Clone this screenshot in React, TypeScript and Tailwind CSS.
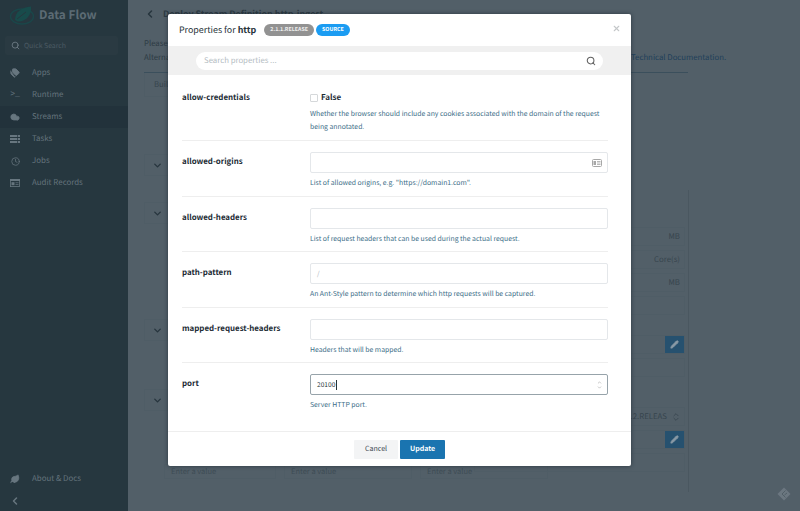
import { ChevronLeft, ChevronDown, ChevronsUpDown, Pencil, Search, X, Tags, Cloud, Clock, Leaf, ChevronUp } from "lucide-react";

const F = "font-['Noto_Sans_CJK_SC','Liberation_Sans',sans-serif] [text-rendering:geometricPrecision]";

function Logo() {
  return (
    <svg width="26" height="24" viewBox="0 0 26 24" className="shrink-0">
      <ellipse cx="13" cy="13.5" rx="11.5" ry="7.5" fill="none" stroke="#1a4649" strokeWidth="1.4" />
      <path d="M6 17C6 9 13 4 22 3.5C23 11 18 18.5 9 18.5Z" fill="#184b4b" />
      <path d="M8 16L17 9" stroke="#26373f" strokeWidth="1" />
    </svg>
  );
}

function NavItem({ icon, label, active }: { icon: React.ReactNode; label: string; active?: boolean }) {
  return (
    <div className={`flex h-[22px] items-center pl-[4px] ${active ? "bg-[#22323b]" : ""}`}>
      <span className="flex w-[22px] justify-center text-[#67767f]">{icon}</span>
      <span className="ml-[6px] text-[7.9px] text-[#64737c]">{label}</span>
    </div>
  );
}

function TasksIcon() {
  return (
    <svg width="10" height="8" viewBox="0 0 10 8" fill="#67767f">
      <rect x="0" y="0" width="10" height="2" />
      <rect x="0" y="3" width="10" height="2" />
      <rect x="0" y="6" width="10" height="2" />
      <rect x="7" y="0" width="0.7" height="8" fill="#26373f" />
    </svg>
  );
}

function AuditIcon() {
  return (
    <svg width="10" height="8" viewBox="0 0 10 8">
      <rect x="0.4" y="0.4" width="9.2" height="7.2" fill="none" stroke="#67767f" strokeWidth="0.8" />
      <rect x="0" y="0" width="10" height="2" fill="#67767f" />
      <rect x="1.5" y="3.2" width="3" height="3" fill="#67767f" />
      <path d="M5.5 3.7H8.5M5.5 5.5H8.5" stroke="#67767f" strokeWidth="0.7" />
    </svg>
  );
}

function Sidebar() {
  return (
    <aside className="flex h-full w-[128px] shrink-0 flex-col bg-[#26373f]">
      <div className="flex h-[28px] items-center pl-[9px] pt-[1px]">
        <Logo />
        <span className="ml-[4px] text-[11.8px] font-bold text-[#5c6b74]">Data Flow</span>
      </div>
      <div className="mx-[5px] mt-[8px] flex h-[19px] w-[113px] items-center rounded-[2px] bg-[#2a3a42] pl-[6px] text-[#6a7881]">
        <Search size={9} strokeWidth={2.5} />
        <span className="ml-[4px] text-[6.9px] text-[#4c5b64]">Quick Search</span>
      </div>
      <div className="mt-[7px] flex flex-col">
        <NavItem icon={<Tags size={10} fill="#67767f" />} label="Apps" />
        <NavItem icon={<span className="font-['Liberation_Mono',monospace] text-[8px] leading-none">&gt;_</span>} label="Runtime" />
        <NavItem icon={<Cloud size={10} fill="#67767f" />} label="Streams" active />
        <NavItem icon={<TasksIcon />} label="Tasks" />
        <NavItem icon={<Clock size={9} />} label="Jobs" />
        <NavItem icon={<AuditIcon />} label="Audit Records" />
      </div>
      <div className="mt-auto flex h-[22px] items-center pl-[4px]">
        <span className="flex w-[22px] justify-center text-[#67767f]"><Leaf size={10} fill="#67767f" /></span>
        <span className="ml-[6px] text-[7.9px] text-[#64737c]">About &amp; Docs</span>
      </div>
      <div className="flex h-[21px] items-center pl-[9px] text-[#67767f]"><ChevronLeft size={12} strokeWidth={3} /></div>
    </aside>
  );
}

function BgSection({ mt }: { mt: string }) {
  return (
    <div className={`${mt} flex h-[22px] w-[26px] items-center justify-center border border-[#4f5d66] text-[#27353e]`}>
      <ChevronDown size={11} strokeWidth={3} />
    </div>
  );
}

function BgRow({ text, button, mt }: { text?: string; button?: boolean; mt: string }) {
  return (
    <div className={`${mt} flex h-[19px] items-center justify-end border border-[#4f5d66] text-[7.8px] text-[#37454e]`}>
      {text && <span className="mr-[4px]">{text}</span>}
      {button && (
        <span className="flex h-[17px] w-[19px] items-center justify-center bg-[#26516f] text-[#8a9aa5]">
          <Pencil size={9} fill="#8a9aa5" />
        </span>
      )}
    </div>
  );
}

function Background() {
  return (
    <main className="relative flex h-full min-w-0 flex-1 flex-col overflow-hidden bg-[#525f68] pl-[16px] text-[#2d3b44]">
      <div className="flex h-[28px] shrink-0 items-center text-[8.9px] font-semibold">
        <ChevronLeft size={12} strokeWidth={3} className="text-[#27353e]" />
        <span className="ml-[7px] whitespace-nowrap leading-none">Deploy Stream Definition http-ingest</span>
      </div>
      <div className="mt-[9px] flex shrink-0 flex-col text-[7.8px] leading-[14px] text-[#2d3b44]">
        <span>Please</span>
        <div className="relative h-[14px]">
          <span>Alternatively</span>
          <span className="absolute left-[487px] top-0 whitespace-nowrap text-[#21405a]">Technical Documentation.</span>
        </div>
      </div>
      <div className="mt-[7px] h-[24px] w-[544px] shrink-0 border-t border-[#3b4f5c]">
        <div className="flex h-[24px] w-[50px] items-center border-x border-b border-[#4f5d66] pl-[9px] text-[7.8px] text-[#37454e]">Build</div>
      </div>
      <div className="w-[544px]">
        <BgSection mt="mt-[58px]" />
        <BgSection mt="mt-[26px]" />
      </div>
      <div className="absolute left-[16px] top-[227px] flex w-[541px] flex-col pl-[330px]">
        <BgRow text="MB" mt="mt-0" />
        <BgRow text="Core(s)" mt="mt-[4px]" />
        <BgRow text="MB" mt="mt-[4px]" />
        <BgRow mt="mt-[4px]" />
        <BgRow button mt="mt-[20px]" />
        <BgRow mt="mt-[4px]" />
        <div className="mt-[30px] flex h-[19px] items-center justify-end border border-[#4f5d66] text-[7.8px] text-[#37454e]">
          <span className="mr-[4px]">1.2.RELEAS</span>
          <ChevronsUpDown size={10} strokeWidth={2} className="mr-[3px]" />
        </div>
        <BgRow button mt="mt-[4px]" />
        <BgRow mt="mt-[4px]" />
      </div>
      <div className="w-[544px]">
        <BgSection mt="mt-[95px]" />
        <BgSection mt="mt-[48px]" />
      </div>
      <div className="absolute left-[36px] top-[464px] flex gap-[8px] text-[7.5px] leading-[13px] text-[#3e4c55]">
        <span className="h-[15px] w-[112px] border border-[#4f5d66] pl-[6px]">Enter a value</span>
        <span className="h-[15px] w-[128px] border border-[#4f5d66] pl-[6px]">Enter a value</span>
        <span className="h-[15px] w-[128px] border border-[#4f5d66] pl-[6px]">Enter a value</span>
      </div>
      <div className="absolute left-[560px] top-[190px] h-[302px] w-px bg-[#4a5760]" />
      <svg width="16" height="16" viewBox="0 0 16 16" className="absolute left-[648px] top-[486px]">
        <path d="M8 1.5L14.5 8L8 14.5L1.5 8Z" fill="#6b7780" />
        <path d="M9.5 4.5L6 8L9.5 11.5M11 7L8.5 9" fill="none" stroke="#525f68" strokeWidth="1" />
      </svg>
    </main>
  );
}

const DESC = "text-[6.85px] leading-[13px] text-[#3b6d87]";
const LABEL = "w-[128px] shrink-0 text-[7.9px] font-bold leading-[13px] text-[#1b2a33]";

function FieldRow({ label, children, desc }: { label: string; children: React.ReactNode; desc: string }) {
  return (
    <div className="flex h-[55.5px] border-b border-[#eeeeee] pt-[11px]">
      <div className={`${LABEL} pt-[3px]`}>{label}</div>
      <div className="flex-1">
        {children}
        <p className={`mt-[3px] ${DESC}`}>{desc}</p>
      </div>
    </div>
  );
}

function TextBox({ value, placeholder, right, focused }: { value?: string; placeholder?: string; right?: React.ReactNode; focused?: boolean }) {
  return (
    <div className={`flex h-[21px] items-center justify-between rounded-[2px] border pl-[6px] pr-[5px] text-[6.6px] leading-none ${focused ? "border-[#97a3aa]" : "border-[#e4e7ea]"}`}>
      <span className={`flex items-center ${placeholder ? "text-[#aab2b8]" : "text-[#263238]"}`}>
        {value}{placeholder}
        {focused && <span className="ml-[1px] h-[10px] w-px bg-[#263238]" />}
      </span>
      {right}
    </div>
  );
}

function Modal() {
  return (
    <div className="absolute left-[168px] top-[14px] flex h-[452px] w-[463px] flex-col rounded-[2px] bg-white shadow-[0_0_4px_rgba(20,30,40,0.6)]">
      <div className="relative flex h-[32px] shrink-0 items-center pl-[11px]">
        <span className="text-[8.9px] leading-none text-[#263238]">Properties for <b>http</b></span>
        <span className="ml-[8px] flex h-[12px] items-center rounded-full bg-[#929292] px-[6px] text-[5.3px] font-bold text-[#eeeeee]">2.1.1.RELEASE</span>
        <span className="ml-[2px] flex h-[12px] items-center rounded-full bg-[#1b9cf2] px-[6px] text-[5.3px] font-bold text-white">SOURCE</span>
        <X size={9} strokeWidth={3} className="absolute right-[10px] top-[10px] text-[#c4c7c9]" />
      </div>
      <div className="flex h-[29px] shrink-0 items-center bg-[#f0f0f0] pl-[28px] pr-[28px]">
        <div className="flex h-[18px] flex-1 items-center justify-between rounded-full bg-white pl-[8px] pr-[7px]">
          <span className="text-[7.8px] leading-none text-[#b4bcc2]">Search properties ...</span>
          <Search size={10} strokeWidth={2.5} className="text-[#5f5f5f]" />
        </div>
      </div>
      <div className="flex flex-1 flex-col pl-[14px] pr-[23px]">
        <div className="flex h-[66px] border-b border-[#eeeeee] pt-[16px]">
          <div className={LABEL}>allow-credentials</div>
          <div className="flex-1">
            <div className="flex h-[13px] items-center">
              <span className="h-[8px] w-[8px] rounded-[1px] border border-[#d5d8da]" />
              <span className="ml-[3px] text-[8px] font-bold text-[#1b2a33]">False</span>
            </div>
            <p className={`mt-[3px] ${DESC}`}>Whether the browser should include any cookies associated with the domain of the request being annotated.</p>
          </div>
        </div>
        <FieldRow label="allowed-origins" desc={'List of allowed origins, e.g. "https://domain1.com".'}>
          <TextBox right={
            <svg width="10" height="8" viewBox="0 0 10 8"><rect x="0.5" y="0.5" width="9" height="7" rx="1" fill="none" stroke="#a7a7a7" /><rect x="1.5" y="2" width="2.5" height="4" fill="#a7a7a7" /><path d="M5 2.5H8.5M5 4H8.5M5 5.5H8.5" stroke="#a7a7a7" strokeWidth="0.8" /></svg>
          } />
        </FieldRow>
        <FieldRow label="allowed-headers" desc="List of request headers that can be used during the actual request.">
          <TextBox />
        </FieldRow>
        <FieldRow label="path-pattern" desc="An Ant-Style pattern to determine which http requests will be captured.">
          <TextBox placeholder="/" />
        </FieldRow>
        <FieldRow label="mapped-request-headers" desc="Headers that will be mapped.">
          <TextBox />
        </FieldRow>
        <div className="flex h-[68px] pt-[11px]">
          <div className={`${LABEL} pt-[3px]`}>port</div>
          <div className="flex-1">
            <TextBox value="20100" focused right={
              <span className="flex flex-col text-[#a9a9a9]"><ChevronUp size={5} strokeWidth={3} /><ChevronDown size={5} strokeWidth={3} /></span>
            } />
            <p className={`mt-[3px] ${DESC}`}>Server HTTP port.</p>
          </div>
        </div>
      </div>
      <div className="flex h-[35px] shrink-0 items-center justify-center gap-[2px] border-t border-[#eeeeee]">
        <span className="flex h-[19px] w-[44px] items-center justify-center rounded-[1px] bg-[#f3f4f5] text-[7.1px] text-[#3d4a52]">Cancel</span>
        <span className="flex h-[19px] w-[45px] items-center justify-center rounded-[1px] bg-[#1a74b0] text-[7px] font-semibold text-white">Update</span>
      </div>
    </div>
  );
}

export default function App() {
  return (
    <div className={`relative flex h-[511px] w-full overflow-hidden ${F}`}>
      <Sidebar />
      <Background />
      <Modal />
    </div>
  );
}
